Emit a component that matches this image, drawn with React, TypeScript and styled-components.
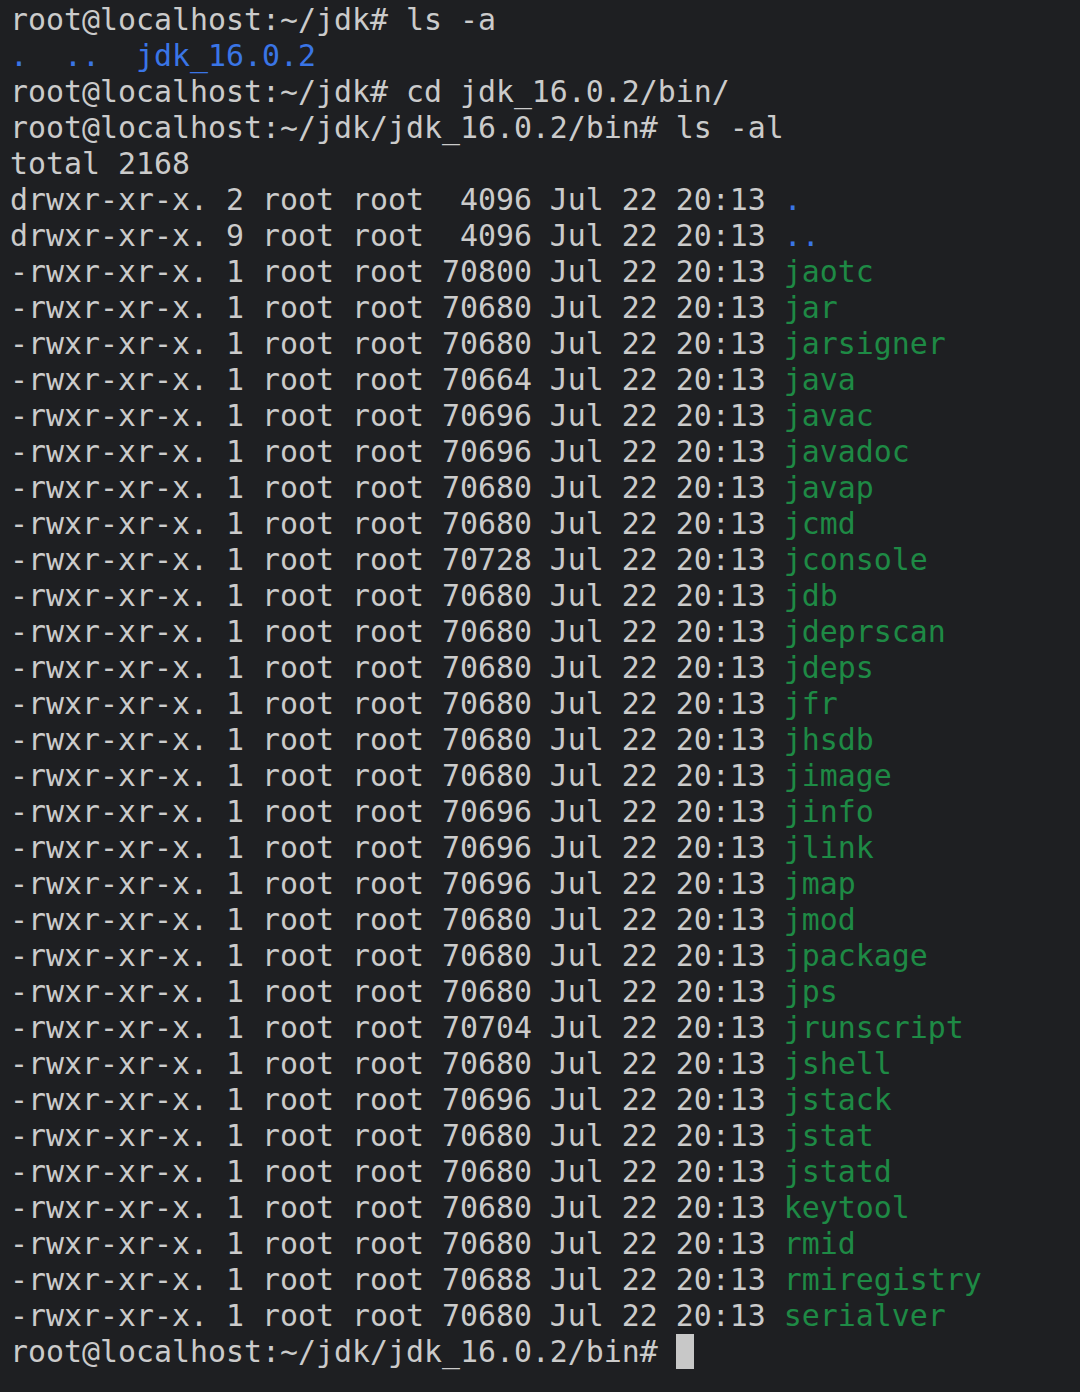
import React from "react";
import styled, { createGlobalStyle } from "styled-components";

const Global = createGlobalStyle`
  html, body { margin: 0; padding: 0; background: #1e1f22; }
  #root { min-height: 1392px; }
`;

const Terminal = styled.div`
  background: #1e1f22;
  min-height: 1392px;
  box-sizing: border-box;
  padding: 2px 0 0 10px;
  font-family: "DejaVu Sans Mono", "Liberation Mono", monospace;
  font-size: 29.9px;
  line-height: 36px;
  color: #cbcbcb;
  white-space: pre;
`;

const Line = styled.div`
  display: block;
  height: 36px;
  line-height: 36px;
`;

type Tone = "dir" | "exec" | "plain";
const toneColor: Record<Tone, string> = {
  dir: "#3a75e6",
  exec: "#1e8a45",
  plain: "#cbcbcb",
};

const Name = styled.span<{ $tone: Tone }>`
  color: ${(p) => toneColor[p.$tone]};
`;

const Cursor = styled.span`
  display: inline-block;
  vertical-align: top;
  width: 18px;
  height: 35px;
  background: #c8c8c8;
`;

const files: [string, string][] = [
  ["70800", "jaotc"],
  ["70680", "jar"],
  ["70680", "jarsigner"],
  ["70664", "java"],
  ["70696", "javac"],
  ["70696", "javadoc"],
  ["70680", "javap"],
  ["70680", "jcmd"],
  ["70728", "jconsole"],
  ["70680", "jdb"],
  ["70680", "jdeprscan"],
  ["70680", "jdeps"],
  ["70680", "jfr"],
  ["70680", "jhsdb"],
  ["70680", "jimage"],
  ["70696", "jinfo"],
  ["70696", "jlink"],
  ["70696", "jmap"],
  ["70680", "jmod"],
  ["70680", "jpackage"],
  ["70680", "jps"],
  ["70704", "jrunscript"],
  ["70680", "jshell"],
  ["70696", "jstack"],
  ["70680", "jstat"],
  ["70680", "jstatd"],
  ["70680", "keytool"],
  ["70680", "rmid"],
  ["70688", "rmiregistry"],
  ["70680", "serialver"],
];

export default function App() {
  return (
    <>
      <Global />
      <Terminal>
        <Line>root@localhost:~/jdk# ls -a</Line>
        <Line>
          <Name $tone="dir">.</Name>
          {"  "}
          <Name $tone="dir">..</Name>
          {"  "}
          <Name $tone="dir">jdk_16.0.2</Name>
        </Line>
        <Line>root@localhost:~/jdk# cd jdk_16.0.2/bin/</Line>
        <Line>root@localhost:~/jdk/jdk_16.0.2/bin# ls -al</Line>
        <Line>total 2168</Line>
        <Line>
          {"drwxr-xr-x. 2 root root  4096 Jul 22 20:13 "}
          <Name $tone="dir">.</Name>
        </Line>
        <Line>
          {"drwxr-xr-x. 9 root root  4096 Jul 22 20:13 "}
          <Name $tone="dir">..</Name>
        </Line>
        {files.map(([size, name]) => (
          <Line key={name}>
            {`-rwxr-xr-x. 1 root root ${size} Jul 22 20:13 `}
            <Name $tone="exec">{name}</Name>
          </Line>
        ))}
        <Line>
          {"root@localhost:~/jdk/jdk_16.0.2/bin# "}
          <Cursor />
        </Line>
      </Terminal>
    </>
  );
}
